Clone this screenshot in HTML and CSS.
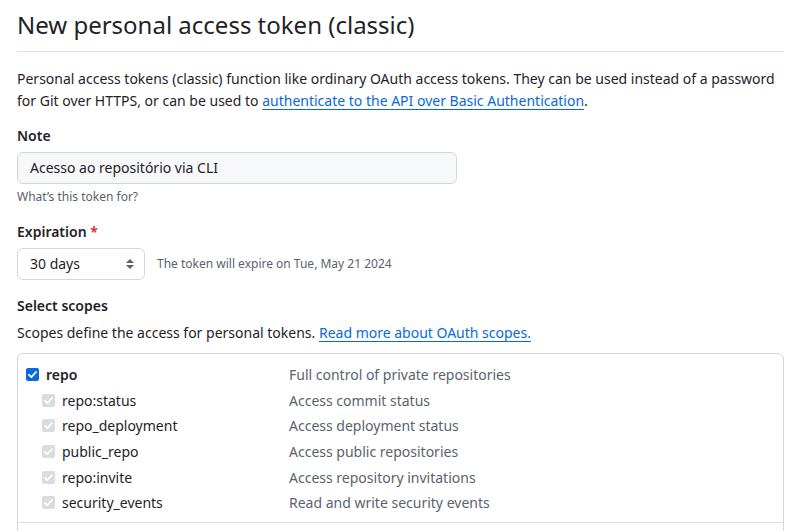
FILE: index.html
```html
<!DOCTYPE html>
<html>
<head>
<meta charset="utf-8">
<link rel="stylesheet" href="styles.css">
</head>
<body>
<div class="page">
  <h1 class="title">New personal access token (classic)</h1>
  <p class="intro">Personal access tokens (classic) function like ordinary OAuth access tokens. They can be used instead of a password for Git over HTTPS, or can be used to <a href="#">authenticate to the API over Basic Authentication</a>.</p>

  <div class="field">
    <label class="label">Note</label>
    <div class="input">Acesso ao repositório via CLI</div>
    <div class="hint">What’s this token for?</div>
  </div>

  <div class="field">
    <label class="label">Expiration <span class="req">*</span></label>
    <div class="exp-row">
      <div class="select">30 days
        <svg class="caret" width="10" height="14" viewBox="0 0 10 14"><path d="M5 2 L9 6 H1 Z M5 12 L1 8 H9 Z" fill="#59636e"/></svg>
      </div>
      <span class="exp-note">The token will expire on Tue, May 21 2024</span>
    </div>
  </div>

  <div class="field scopes-head">
    <label class="label">Select scopes</label>
    <p class="scopes-desc">Scopes define the access for personal tokens. <a href="#">Read more about OAuth scopes.</a></p>
  </div>

  <div class="scope-box">
    <div class="group">
      <div class="row">
        <div class="name parent"><span class="cb on"><svg width="13" height="13" viewBox="0 0 13 13"><path d="M3 6.8 L5.4 9.2 L10 4" fill="none" stroke="#fff" stroke-width="1.8" stroke-linecap="round" stroke-linejoin="round"/></svg></span><b>repo</b></div>
        <div class="desc">Full control of private repositories</div>
      </div>
      <div class="row">
        <div class="name child"><span class="cb dis"><svg width="13" height="13" viewBox="0 0 13 13"><path d="M3 6.8 L5.4 9.2 L10 4" fill="none" stroke="#fff" stroke-width="1.8" stroke-linecap="round" stroke-linejoin="round"/></svg></span>repo:status</div>
        <div class="desc">Access commit status</div>
      </div>
      <div class="row">
        <div class="name child"><span class="cb dis"><svg width="13" height="13" viewBox="0 0 13 13"><path d="M3 6.8 L5.4 9.2 L10 4" fill="none" stroke="#fff" stroke-width="1.8" stroke-linecap="round" stroke-linejoin="round"/></svg></span>repo_deployment</div>
        <div class="desc">Access deployment status</div>
      </div>
      <div class="row">
        <div class="name child"><span class="cb dis"><svg width="13" height="13" viewBox="0 0 13 13"><path d="M3 6.8 L5.4 9.2 L10 4" fill="none" stroke="#fff" stroke-width="1.8" stroke-linecap="round" stroke-linejoin="round"/></svg></span>public_repo</div>
        <div class="desc">Access public repositories</div>
      </div>
      <div class="row">
        <div class="name child"><span class="cb dis"><svg width="13" height="13" viewBox="0 0 13 13"><path d="M3 6.8 L5.4 9.2 L10 4" fill="none" stroke="#fff" stroke-width="1.8" stroke-linecap="round" stroke-linejoin="round"/></svg></span>repo:invite</div>
        <div class="desc">Access repository invitations</div>
      </div>
      <div class="row">
        <div class="name child"><span class="cb dis"><svg width="13" height="13" viewBox="0 0 13 13"><path d="M3 6.8 L5.4 9.2 L10 4" fill="none" stroke="#fff" stroke-width="1.8" stroke-linecap="round" stroke-linejoin="round"/></svg></span>security_events</div>
        <div class="desc">Read and write security events</div>
      </div>
    </div>
    <div class="group next"></div>
  </div>
</div>
</body>
</html>
```
FILE: styles.css
```css
* { box-sizing: border-box; }
html, body { margin: 0; padding: 0; background: #fff; }
body {
  font-family: "Noto Sans", "Open Sans", sans-serif;
  color: #1f2328;
  font-size: 14px;
  line-height: 1.5;
  overflow: hidden;
}
.page { padding: 0 14px 0 17px; }
a { color: #0969da; text-decoration: underline; text-underline-offset: 3px; }
.title {
  margin: 0 0 16px;
  padding: 7px 0 8px;
  font-size: 24px;
  font-weight: 400;
  line-height: 1.5;
  border-bottom: 1px solid #d8dee4;
}
.intro { margin: 0 0 13px; line-height: 22px; }
.field { margin-bottom: 15px; }
.label { display: block; font-weight: 600; margin-bottom: 6px; line-height: 21px; }
.req { color: #d1242f; }
.input {
  width: 440px;
  height: 32px;
  padding: 0 12px;
  line-height: 30px;
  background: #f6f8fa;
  border: 1px solid #d0d7de;
  border-radius: 6px;
}
.hint { font-size: 12px; color: #59636e; margin-top: 4px; line-height: 18px; }
.exp-row { display: flex; align-items: center; gap: 12px; }
.select {
  width: 128px;
  height: 32px;
  padding: 0 12px;
  line-height: 30px;
  border: 1px solid #d0d7de;
  border-radius: 6px;
  display: flex;
  align-items: center;
  justify-content: space-between;
}
.caret { margin-right: -3px; }
.exp-note { font-size: 12px; color: #59636e; }
.scopes-head { margin-top: 15px; margin-bottom: 10px; }
.scopes-head .label { margin-bottom: 6px; }
.scopes-desc { margin: 0; }
.scope-box {
  border: 1px solid #d0d7de;
  border-radius: 6px;
  height: 300px;
}
.group { padding: 8px 0 6px; border-bottom: 1px solid #d8dee4; }
.row { display: flex; height: 25.6px; align-items: center; }
.name { width: 271px; display: flex; align-items: center; }
.name.parent { padding-left: 8px; }
.name.child { padding-left: 24px; }
.desc { color: #59636e; }
.cb {
  width: 13px; height: 13px;
  border-radius: 2px;
  margin-right: 7px;
  display: inline-flex;
}
.cb.on { background: #0969da; }
.cb.dis { background: #dcdcdc; }
.name b { font-weight: 600; }
.group.next { border-bottom: none; }
```
